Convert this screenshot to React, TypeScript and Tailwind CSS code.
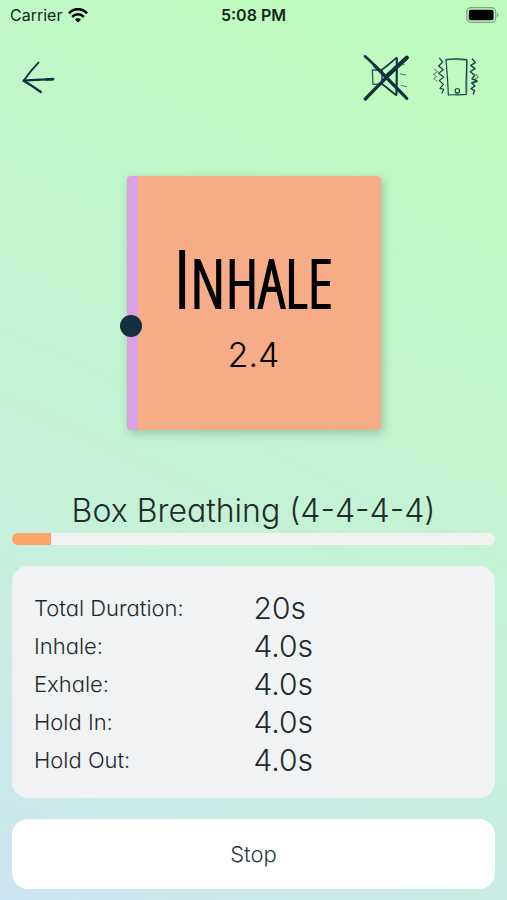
import React from "react";

const phase = { name: "Inhale", remaining: "2.4", travelled: 0.594 };
const sessionProgress = 0.081;

const details = [
  { label: "Total Duration:", value: "20s" },
  { label: "Inhale:", value: "4.0s" },
  { label: "Exhale:", value: "4.0s" },
  { label: "Hold In:", value: "4.0s" },
  { label: "Hold Out:", value: "4.0s" },
];

function WifiIcon() {
  return (
    <svg viewBox="0 0 20 15" className="h-[15px] w-5" fill="none" stroke="#000" strokeWidth="2.6" aria-hidden="true">
      <path d="M1 5.4C6-.2 14-.2 19 5.4" />
      <path d="M4.2 9C7.6 5.4 12.4 5.4 15.8 9" />
      <path d="M7 11.4C8.6 9.7 11.4 9.7 13 11.4L10 14.6Z" fill="#000" stroke="none" />
    </svg>
  );
}

function BatteryIcon() {
  return (
    <svg viewBox="0 0 33 16" className="h-4 w-[33px]" aria-hidden="true">
      <rect x="0.7" y="0.7" width="29" height="14.6" rx="4.4" fill="none" stroke="#7fa780" strokeWidth="1.3" />
      <rect x="2.8" y="2.8" width="24.8" height="10.4" rx="2" fill="#000" />
      <path d="M31 5.6C32.8 6.4 32.8 9.6 31 10.4Z" fill="#7fa780" />
    </svg>
  );
}

function BackIcon() {
  return (
    <svg viewBox="66 180 100 98" className="h-[33px] w-[33px]" fill="none" stroke="#12303f" strokeLinecap="round" strokeLinejoin="round" aria-hidden="true">
      <path d="M116 184C102 198 84 220 71 239" strokeWidth="6" />
      <path d="M71 239C88 249 108 262 123 273" strokeWidth="7" />
      <path d="M72 239C98 235 130 236 160 234" strokeWidth="7" />
      <path d="M140 235L160 234" strokeWidth="8" />
    </svg>
  );
}

function MuteIcon() {
  return (
    <svg viewBox="36 158 141 141" className="h-[47px] w-[47px]" fill="none" stroke="#12303f" strokeLinecap="round" strokeLinejoin="round" aria-hidden="true">
      <path d="M92 206L64 206L66 249L93 248" strokeWidth="4" opacity="0.8" />
      <path d="M91 205L92 250M95 207L94 246" strokeWidth="3" opacity="0.7" />
      <path d="M92 205C108 195 122 181 137 169L136 282C121 271 108 258 93 248" strokeWidth="5" />
      <path d="M138 172L137 278" strokeWidth="5" />
      <path d="M148 192L160 189M148 218L165 221M150 252L167 256" strokeWidth="3" opacity="0.6" />
      <path d="M42 165C82 201 125 247 168 292" strokeWidth="8" />
      <path d="M70 192L166 290" strokeWidth="9" />
      <path d="M168 169C125 208 82 252 43 293" strokeWidth="10" />
      <path d="M167 169L110 222" strokeWidth="12" />
    </svg>
  );
}

function VibrateIcon() {
  return (
    <svg viewBox="246 166 144 126" className="h-[42px] w-12" fill="none" stroke="#1d4048" strokeLinecap="round" strokeLinejoin="round" aria-hidden="true">
      <path d="M286 178C307 174 329 174 350 177C351 211 346 246 349 281C331 284 312 281 295 283C294 247 291 211 288 178" strokeWidth="3.6" />
      <path d="M290 175L352 179L351 276" strokeWidth="2.4" opacity="0.6" />
      <circle cx="322" cy="270" r="6.5" strokeWidth="3.4" />
      <path d="M317 278L328 277" strokeWidth="2" />
      <path d="M269 173L278 184L266 196L280 207L266 218L281 229L268 240L280 251L270 263L281 266L276 277" strokeWidth="3.6" />
      <path d="M253 206L263 213L250 221L259 228L251 234L262 242" strokeWidth="2.8" opacity="0.7" />
      <path d="M367 175L376 186L362 194L375 204L361 213L374 224L366 235L381 240L365 247L375 256L363 264L374 270L370 280" strokeWidth="4.2" />
      <path d="M378 221L385 229L374 236L383 242L372 248" strokeWidth="3" opacity="0.8" />
    </svg>
  );
}

export default function App() {
  return (
    <div className="flex min-h-screen flex-col bg-[linear-gradient(205deg,#bffabf_10%,#c6f0dc_66%,#cbe5f0_100%)] font-['Inter',sans-serif] font-light text-[#222b2b]">
      <div className="grid h-[30px] grid-cols-3 items-center px-2 text-base text-[#14281a]">
        <div className="flex items-center gap-1.5 pl-0.5 font-normal">
          Carrier
          <WifiIcon />
        </div>
        <div className="text-center font-semibold">5:08 PM</div>
        <div className="flex justify-end">
          <BatteryIcon />
        </div>
      </div>

      <header className="flex h-[94px] items-center justify-between pr-[27px] pl-[22px]">
        <button type="button" aria-label="Back">
          <BackIcon />
        </button>
        <div className="flex items-center gap-[22px]">
          <button type="button" aria-label="Sound off">
            <MuteIcon />
          </button>
          <button type="button" aria-label="Vibration">
            <VibrateIcon />
          </button>
        </div>
      </header>

      <main className="flex flex-1 flex-col px-3 pb-[11px] [font-feature-settings:'cv11']">
        <section className="flex flex-1 items-center justify-center pb-2">
          <div className="relative flex size-[254px] flex-col items-center justify-center rounded border-l-[11px] border-[#dda0e0] bg-[#f6ac86] pt-2.5 pr-[11px] text-black shadow-[2px_3px_10px_rgba(60,110,80,0.35)]">
            <div className="flex items-baseline font-['Open_Sans_Condensed_Light','Liberation_Sans_Narrow','Open_Sans_Condensed',sans-serif] text-[66px] leading-[90px] [-webkit-text-stroke:2px_#000]">
              <span className="text-[80px] leading-[90px]">{phase.name.charAt(0)}</span>
              <span className="uppercase">{phase.name.slice(1)}</span>
            </div>
            <div className="text-[34px] leading-[56px]">{phase.remaining}</div>
            <span
              className="absolute -left-[18px] size-[22px] -translate-y-1/2 rounded-full bg-[#142f3f]"
              style={{ top: `${phase.travelled * 100}%` }}
            />
          </div>
        </section>

        <h1 className="text-center text-[32px] leading-[44px]">Box Breathing (4-4-4-4)</h1>
        <div
          role="progressbar"
          aria-label="Session progress"
          aria-valuenow={8}
          className="h-3 overflow-hidden rounded-md bg-[#f1f1f2]"
        >
          <div className="h-full bg-[#faa566]" style={{ width: `${sessionProgress * 100}%` }} />
        </div>

        <dl className="mt-[21px] rounded-2xl bg-[#f1f2f4] px-[22px] pt-[23px] pb-[19px]">
          {details.map(({ label, value }) => (
            <div key={label} className="grid h-[38px] grid-cols-2 items-center">
              <dt className="text-[22px] leading-6">{label}</dt>
              <dd className="text-[30px] leading-[38px]">{value}</dd>
            </div>
          ))}
        </dl>

        <button type="button" className="mt-[21px] h-[70px] rounded-2xl bg-white text-[22px] text-[#2b3a40]">
          Stop
        </button>
      </main>
    </div>
  );
}
